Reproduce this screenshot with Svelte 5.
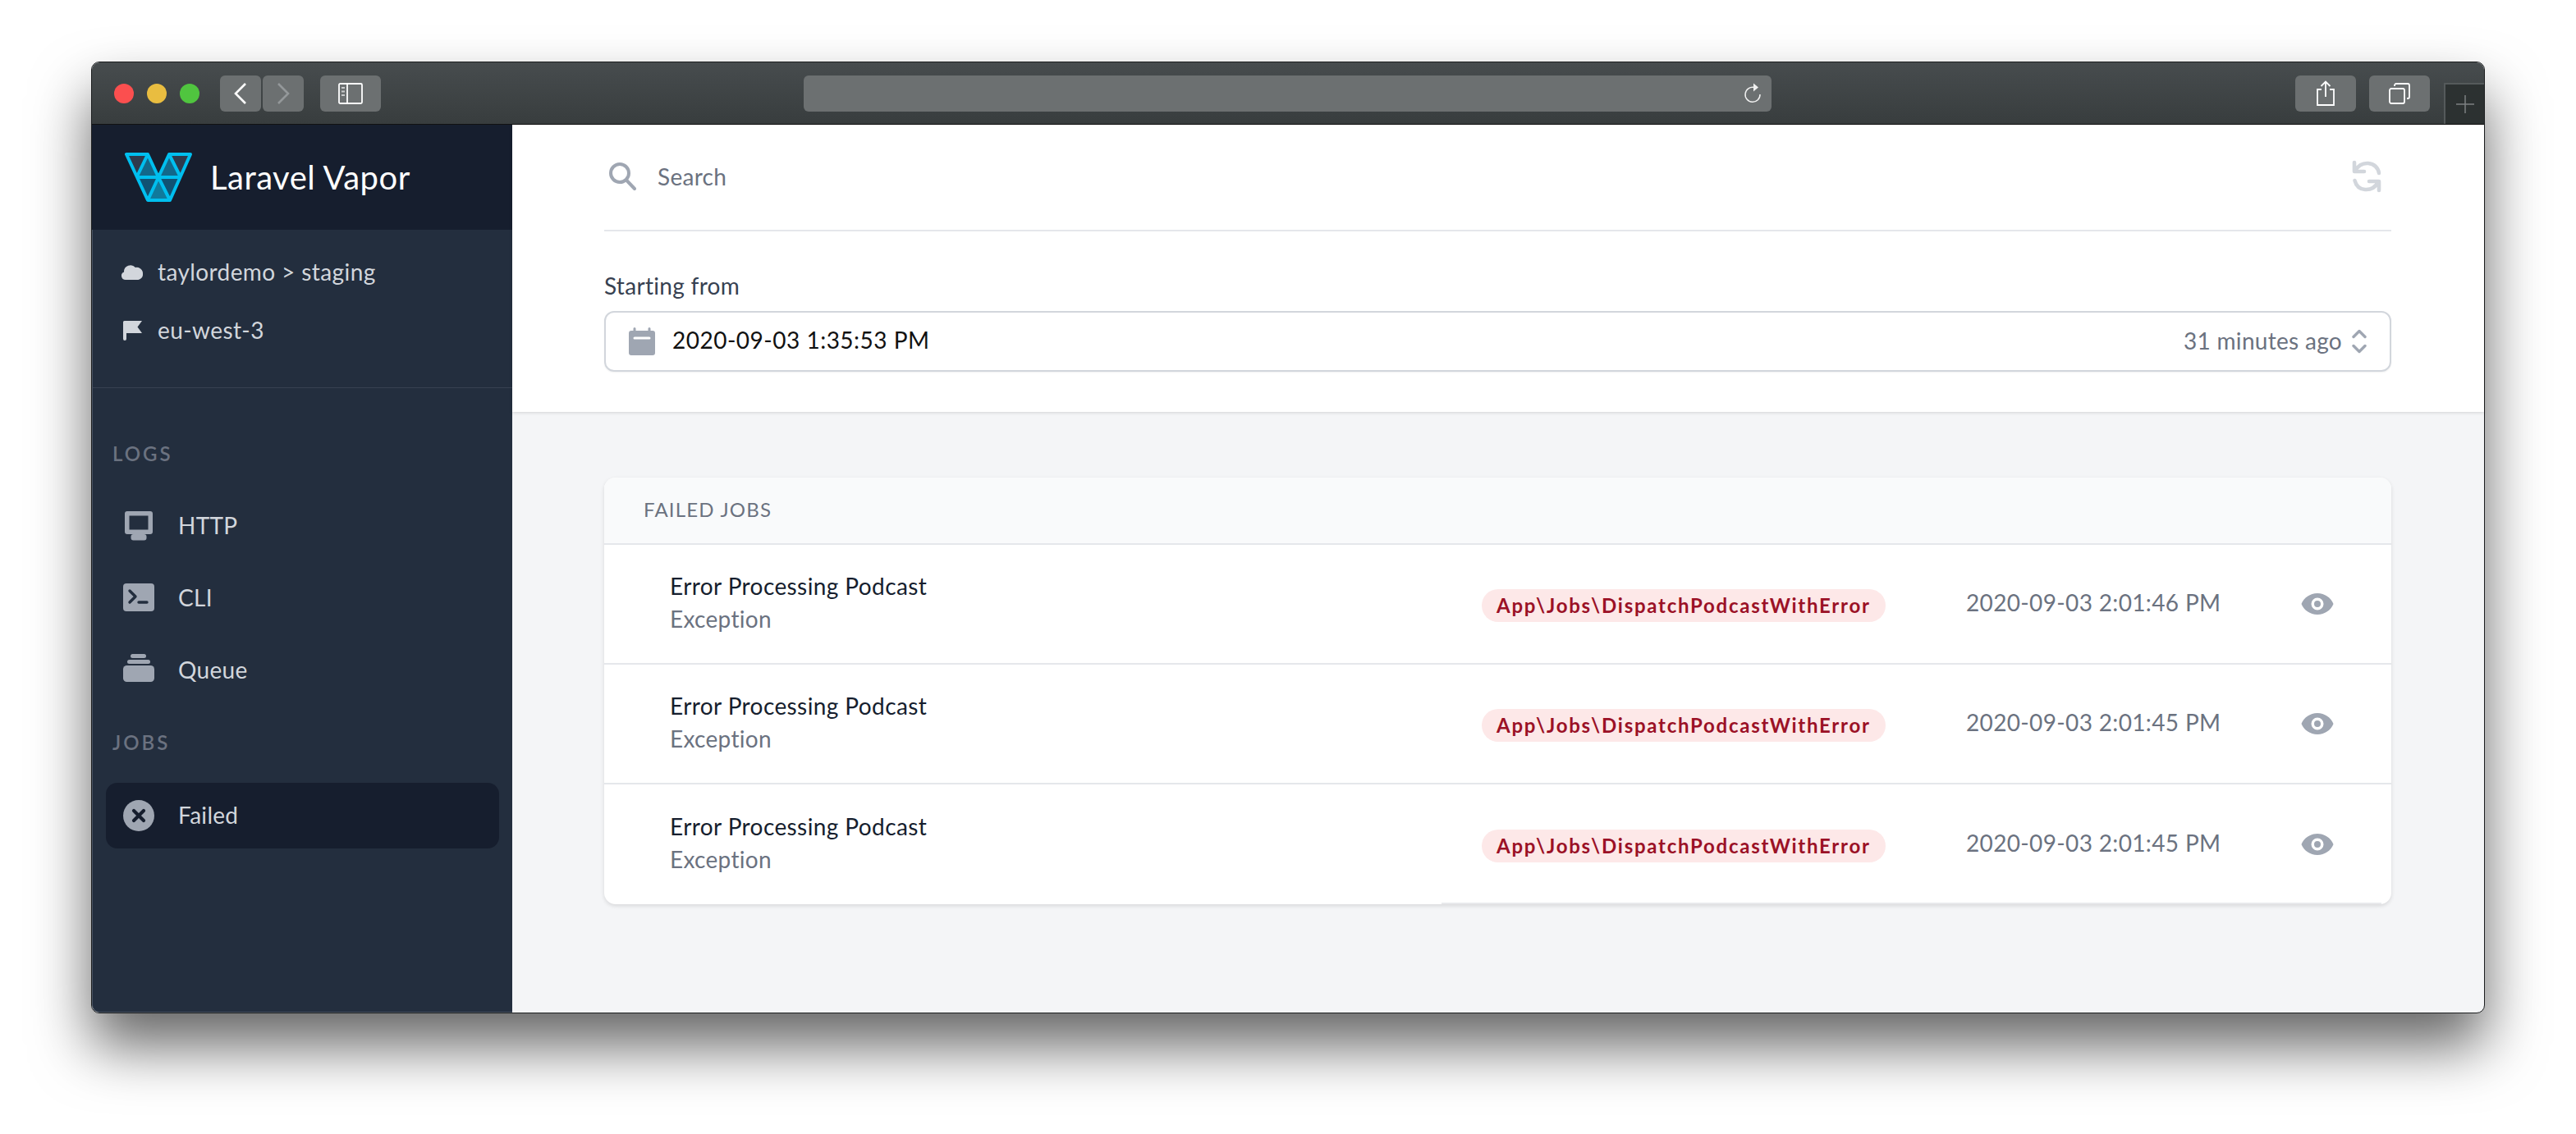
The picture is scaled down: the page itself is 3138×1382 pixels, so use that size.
<script>
  const nav = [
    { label: 'HTTP', icon: 'monitor' },
    { label: 'CLI', icon: 'terminal' },
    { label: 'Queue', icon: 'queue' }
  ];
  const jobs = [
    { time: '2020-09-03 2:01:46 PM' },
    { time: '2020-09-03 2:01:45 PM' },
    { time: '2020-09-03 2:01:45 PM' }
  ];
</script>

<div class="page">
  <div class="window">
    <header class="toolbar">
      <div class="lights">
        <span class="light red"></span>
        <span class="light yellow"></span>
        <span class="light green"></span>
      </div>
      <div class="tbtn nav">
        <svg width="24" height="30" viewBox="0 0 24 30" fill="none" stroke="#fff" stroke-width="2.6"><path d="M18 3 6 15l12 12" /></svg>
      </div>
      <div class="tbtn nav second">
        <svg width="24" height="30" viewBox="0 0 24 30" fill="none" stroke="#94989a" stroke-width="2.6"><path d="M6 3l12 12L6 27" /></svg>
      </div>
      <div class="tbtn side">
        <svg width="30" height="26" viewBox="0 0 30 26" fill="none" stroke="#fff" stroke-width="1.8"><rect x="1" y="1" width="28" height="24" rx="1.5" /><path d="M11 1v24" /><path d="M4 6h4M4 10.5h4M4 15h4" stroke="#c9cbcc" /></svg>
      </div>
      <div class="url">
        <svg width="22" height="28" viewBox="0 0 22 28" fill="none" stroke="#f0f0f0" stroke-width="1.5"><path d="M13 6.500A9 9 0 1 0 20 15" /><path d="M12 1.500l6 5-6 5z" fill="#f0f0f0" stroke="none" /></svg>
      </div>
      <div class="tbtn action first">
        <svg width="24" height="32" viewBox="0 0 24 32" fill="none" stroke="#fff" stroke-width="1.800"><path d="M7 11H2v19h20V11h-5" /><path d="M12 20V2M6.500 7 12 1.500 17.500 7" /></svg>
      </div>
      <div class="tbtn action">
        <svg width="26" height="26" viewBox="0 0 26 26" fill="none" stroke="#fff" stroke-width="1.800"><rect x="1" y="7" width="18" height="18" rx="2" /><path d="M7 4V3a2 2 0 0 1 2-2h14a2 2 0 0 1 2 2v14a2 2 0 0 1-2 2h-1" /></svg>
      </div>
      <div class="newtab">
        <svg width="22" height="22" viewBox="0 0 22 22" stroke="#7c8081" stroke-width="1.500"><path d="M0 11h22M11 0v22" /></svg>
      </div>
    </header>

    <div class="body">
      <aside class="sidebar">
        <div class="brand">
          <svg class="logo" width="82" height="60" viewBox="0 0 82 60">
            <path d="M2 2h26L14.500 30z" fill="#2e3a4c" />
            <path d="M28 2l13 28H14.500z" fill="#12688a" />
            <path d="M54 2l14 28H41z" fill="#12688a" />
            <path d="M54 2h26L68 30z" fill="#2e3a4c" />
            <path d="M14.500 30H41L28 58z" fill="#105273" />
            <path d="M41 30l14 28H28z" fill="#107a9c" />
            <path d="M41 30h27L55 58z" fill="#105273" />
            <path d="M2 2h26l13 28L54 2h26L55 58H28zM14.500 30H68M28 58l13-28 14 28M28 2 14.500 30M54 2l14 28" fill="none" stroke="#00bfef" stroke-width="4" stroke-linejoin="round" />
          </svg>
          <span>Laravel Vapor</span>
        </div>

        <div class="project">
          <div class="meta">
            <svg width="26" height="24" viewBox="0 0 26 24" fill="#d2d6dc"><path d="M5 22a5 5 0 0 1-2-9.600A8 8 0 0 1 17 7a7.500 7.500 0 0 1 9 8 6.500 6.500 0 0 1-5.500 7z" /></svg>
            <span>taylordemo &gt; staging</span>
          </div>
          <div class="meta">
            <svg width="26" height="26" viewBox="0 0 26 26" fill="#d2d6dc"><path d="M2 3.500A1.500 1.500 0 0 1 3.500 2H25l-5.500 7.500L25 17H6v7a2 2 0 0 1-4 0z" /></svg>
            <span>eu-west-3</span>
          </div>
        </div>

        <div class="group first">LOGS</div>
        {#each nav as item}
          <div class="item">
            <svg width="40" height="44" viewBox="0 0 40 44" fill="#9fa6b2">
              {#if item.icon === 'monitor'}
                <path fill-rule="evenodd" d="M6 5h28a3 3 0 0 1 3 3v22a3 3 0 0 1-3 3H6a3 3 0 0 1-3-3V8a3 3 0 0 1 3-3zm2.500 5.500v17h23v-17z" />
                <rect x="10.500" y="33" width="19" height="7.500" rx="3" />
              {:else if item.icon === 'terminal'}
                <rect x="1" y="5" width="38" height="34" rx="4" />
                <path d="M9 14l7 7-7 7M20 28h10" fill="none" stroke="#232e3e" stroke-width="3.400" stroke-linecap="round" stroke-linejoin="round" />
              {:else}
                <rect x="10" y="3" width="19" height="5" rx="2.500" />
                <rect x="6" y="10" width="28" height="5" rx="2.500" />
                <rect x="1" y="17" width="38" height="20" rx="4.500" />
              {/if}
            </svg>
            <span>{item.label}</span>
          </div>
        {/each}

        <div class="group">JOBS</div>
        <div class="item active">
          <svg width="40" height="40" viewBox="0 0 40 40" fill="#9fa6b2">
            <circle cx="20" cy="20" r="19" />
            <path d="M14 14l12 12M26 14 14 26" fill="none" stroke="#161e2e" stroke-width="4.200" stroke-linecap="round" />
          </svg>
          <span class="failed">Failed</span>
        </div>
      </aside>

      <main class="main">
        <section class="filters">
          <div class="search">
            <svg width="34" height="36" viewBox="0 0 34 36" fill="none" stroke="#9fa6b2" stroke-width="4" stroke-linecap="round"><circle cx="14" cy="14" r="11" /><path d="M22.500 23 32 33" /></svg>
            <span class="placeholder">Search</span>
            <svg class="refresh" width="36" height="40" viewBox="0 0 36 40" fill="none" stroke="#d2d6dc" stroke-width="4.600" stroke-linecap="round" stroke-linejoin="round"><path d="M3 3v11h12M4 13C8 6 14 3.500 20 4c7 .5 12 5.500 13 12" /><path d="M33 37V26H21M32 27c-4 7-10 9.500-16 9-7-.5-11-5-12.500-11" /></svg>
          </div>
          <div class="field-label">Starting from</div>
          <div class="field">
            <svg width="32" height="34" viewBox="0 0 32 34" fill="#9fa6b2"><path fill-rule="evenodd" d="M7 0a1.500 1.500 0 0 1 1.500 1.500V4h15V1.500a1.500 1.500 0 0 1 3 0V4H29a3 3 0 0 1 3 3v24a3 3 0 0 1-3 3H3a3 3 0 0 1-3-3V7a3 3 0 0 1 3-3h2.500V1.500A1.500 1.500 0 0 1 7 0zm0 11.500a1.500 1.500 0 0 0 0 3h18a1.500 1.500 0 0 0 0-3z" /></svg>
            <span class="date">2020-09-03 1:35:53 PM</span>
            <span class="ago">31 minutes ago</span>
            <svg width="18" height="30" viewBox="0 0 18 30" fill="none" stroke="#9fa6b2" stroke-width="3.400" stroke-linecap="round" stroke-linejoin="round"><path d="M2 9.500l7-7 7 7M2 20.500l7 7 7-7" /></svg>
          </div>
        </section>

        <section class="card">
          <div class="card-head">FAILED JOBS</div>
          {#each jobs as job}
            <div class="row">
              <div class="info">
                <div class="title">Error Processing Podcast</div>
                <div class="sub">Exception</div>
              </div>
              <div class="badge-cell"><span class="badge">App\Jobs\DispatchPodcastWithError</span></div>
              <div class="time">{job.time}</div>
              <svg class="eye" width="40" height="28" viewBox="0 0 40 28" fill="#9fa6b2"><path fill-rule="evenodd" d="M20 1c9 0 16.500 5.500 19.500 13C36.500 21.500 29 27 20 27S3.500 21.500 .5 14C3.500 6.500 11 1 20 1zm0 5.500a7.500 7.500 0 1 0 0 15 7.500 7.500 0 0 0 0-15zm0 3.500a4 4 0 1 1 0 8 4 4 0 0 1 0-8z" /></svg>
            </div>
          {/each}
        </section>
      </main>
    </div>
  </div>
</div>

<style>
  :global(body) { margin: 0; background: #fff; font-family: Lato, "Open Sans", sans-serif; letter-spacing: .3px; }

  .page {
    box-sizing: border-box;
    height: 1382px;
    padding: 75px 0 0 111px;
    overflow: hidden;
  }
  .window {
    box-sizing: border-box;
    width: 2916px;
    height: 1160px;
    display: flex;
    flex-direction: column;
    border: 1px solid #1c1e1f;
    border-radius: 10px;
    background: #f4f5f7;
    box-shadow: 0 40px 70px rgba(0, 0, 0, .6);
  }

  .toolbar {
    box-sizing: border-box;
    height: 76px;
    flex: none;
    display: flex;
    align-items: center;
    padding-left: 27px;
    background: linear-gradient(#474c4e, #383d3e);
    border-bottom: 1px solid #111;
    border-radius: 9px 9px 0 0;
  }
  .lights { display: flex; gap: 16px; margin-right: 25px; }
  .light { width: 24px; height: 24px; border-radius: 50%; }
  .red { background: #fb4f4f; }
  .yellow { background: #e9bd40; }
  .green { background: #50c53f; }

  .tbtn {
    display: flex;
    align-items: center;
    justify-content: center;
    height: 44px;
    border-radius: 6px;
    background: #6c7071;
  }
  .nav { width: 50px; }
  .nav.second { margin-left: 2px; }
  .side { width: 74px; margin-left: 20px; }
  .url {
    box-sizing: border-box;
    width: 1179px;
    height: 44px;
    margin-left: 515px;
    padding-right: 12px;
    display: flex;
    align-items: center;
    justify-content: flex-end;
    border-radius: 6px;
    background: #6c7071;
  }
  .action { width: 74px; margin-left: 16px; }
  .action.first { margin-left: 638px; }
  .newtab {
    box-sizing: border-box;
    width: 49px;
    height: 50px;
    margin-left: 17px;
    align-self: flex-end;
    display: flex;
    align-items: center;
    justify-content: center;
    background: #2c3131;
    border-top: 2px solid #555a5b;
    border-left: 2px solid #555a5b;
  }

  .body { flex: 1; min-height: 0; display: flex; }

  .sidebar {
    box-sizing: border-box;
    width: 512px;
    flex: none;
    display: flex;
    flex-direction: column;
    background: #232e3e;
    border-left: 1px solid #4b5563;
    border-bottom: 1px solid #4b5563;
    border-radius: 0 0 0 9px;
  }
  .brand {
    height: 128px;
    flex: none;
    display: flex;
    align-items: center;
    gap: 22px;
    margin-left: -1px;
    padding-left: 40px;
    background: #161e2e;
    color: #fff;
    font-size: 40px;
    font-weight: 400;
    letter-spacing: .5px;
  }
  .logo { flex: none; }
  .project {
    height: 193px;
    flex: none;
    box-sizing: border-box;
    padding-top: 33px;
    border-bottom: 1px solid #374151;
  }
  .meta {
    height: 36px;
    margin-bottom: 35px;
    display: flex;
    align-items: center;
    gap: 18px;
    padding-left: 35px;
    color: #d2d6dc;
    font-size: 28px;
    letter-spacing: .400px;
  }
  .group {
    height: 36px;
    line-height: 36px;
    margin: 27px 0 31px 24px;
    color: #6b7280;
    font-size: 24px;
    font-weight: 600;
    letter-spacing: 3px;
  }
  .group.first { margin-top: 62px; margin-bottom: 25px; }
  .item {
    height: 88px;
    flex: none;
    margin: 0 16px;
    display: flex;
    align-items: center;
    gap: 28px;
    padding-left: 20px;
    color: #d2d6dc;
    font-size: 28px;
  }
  .active { height: 80px; background: #161e2e; border-radius: 14px; }
  .failed { margin-top: -2px; }

  .main { flex: 1; min-width: 0; display: flex; flex-direction: column; }
  .filters {
    box-sizing: border-box;
    height: 350px;
    flex: none;
    padding: 0 113px 0 112px;
    background: #fff;
    box-shadow: 0 1px 4px rgba(0, 0, 0, .14);
  }
  .search {
    box-sizing: border-box;
    height: 130px;
    padding-bottom: 2px;
    display: flex;
    align-items: center;
    border-bottom: 2px solid #e5e7eb;
  }
  .search svg:first-child { margin-left: 5px; }
  .placeholder { margin-left: 26px; color: #6b7280; font-size: 28px; }
  .refresh { margin-left: auto; margin-right: 12px; }
  .field-label { margin-top: 48px; height: 36px; line-height: 36px; color: #374151; font-size: 28px; }
  .field {
    box-sizing: border-box;
    height: 74px;
    margin-top: 13px;
    display: flex;
    align-items: center;
    padding: 0 28px;
    border: 2px solid #d2d6dc;
    border-radius: 12px;
    box-shadow: 0 1px 2px rgba(0, 0, 0, .06);
  }
  .date { margin-left: 21px; color: #111; font-size: 28px; letter-spacing: .500px; margin-top: -4px; }
  .ago { margin-left: auto; margin-right: 12px; color: #6b7280; font-size: 28px; margin-top: -2px; }

  .card {
    margin: 80px 113px 0 112px;
    background: #fff;
    border-radius: 14px;
    box-shadow: 0 2px 5px rgba(0, 0, 0, .12);
  }
  .card-head {
    box-sizing: border-box;
    height: 82px;
    display: flex;
    align-items: center;
    padding: 0 0 3px 48px;
    background: #f9fafb;
    border-bottom: 2px solid #e5e7eb;
    border-radius: 14px 14px 0 0;
    color: #6b7280;
    font-size: 24px;
    letter-spacing: 1.200px;
  }
  .row {
    box-sizing: border-box;
    height: 146px;
    display: grid;
    grid-template-columns: 1fr 590px 408px 40px;
    align-items: center;
    padding: 0 70px 0 80px;
    border-bottom: 2px solid #e5e7eb;
    position: relative;
  }
  .row:last-child { border-bottom: 0; }
  /* seam along the bottom of the card, right part only */
  .row:last-child::after {
    content: "";
    position: absolute;
    left: 1020px;
    right: 12px;
    bottom: 0;
    height: 2px;
    background: #e8e9ec;
  }
  .info { padding-bottom: 5px; }
  .title { color: #161e2e; font-size: 28px; line-height: 40px; letter-spacing: .4px; }
  .sub { color: #6b7280; font-size: 28px; line-height: 40px; }
  .badge-cell { padding-top: 4px; }
  .badge {
    display: inline-block;
    height: 40px;
    line-height: 40px;
    padding: 0 18px;
    border-radius: 20px;
    background: #fde8e8;
    color: #9b1126;
    font-size: 24px;
    font-weight: 700;
    letter-spacing: 1.750px;
  }
  .time { color: #6b7280; font-size: 28px; padding-bottom: 4px; letter-spacing: .35px; }
</style>
